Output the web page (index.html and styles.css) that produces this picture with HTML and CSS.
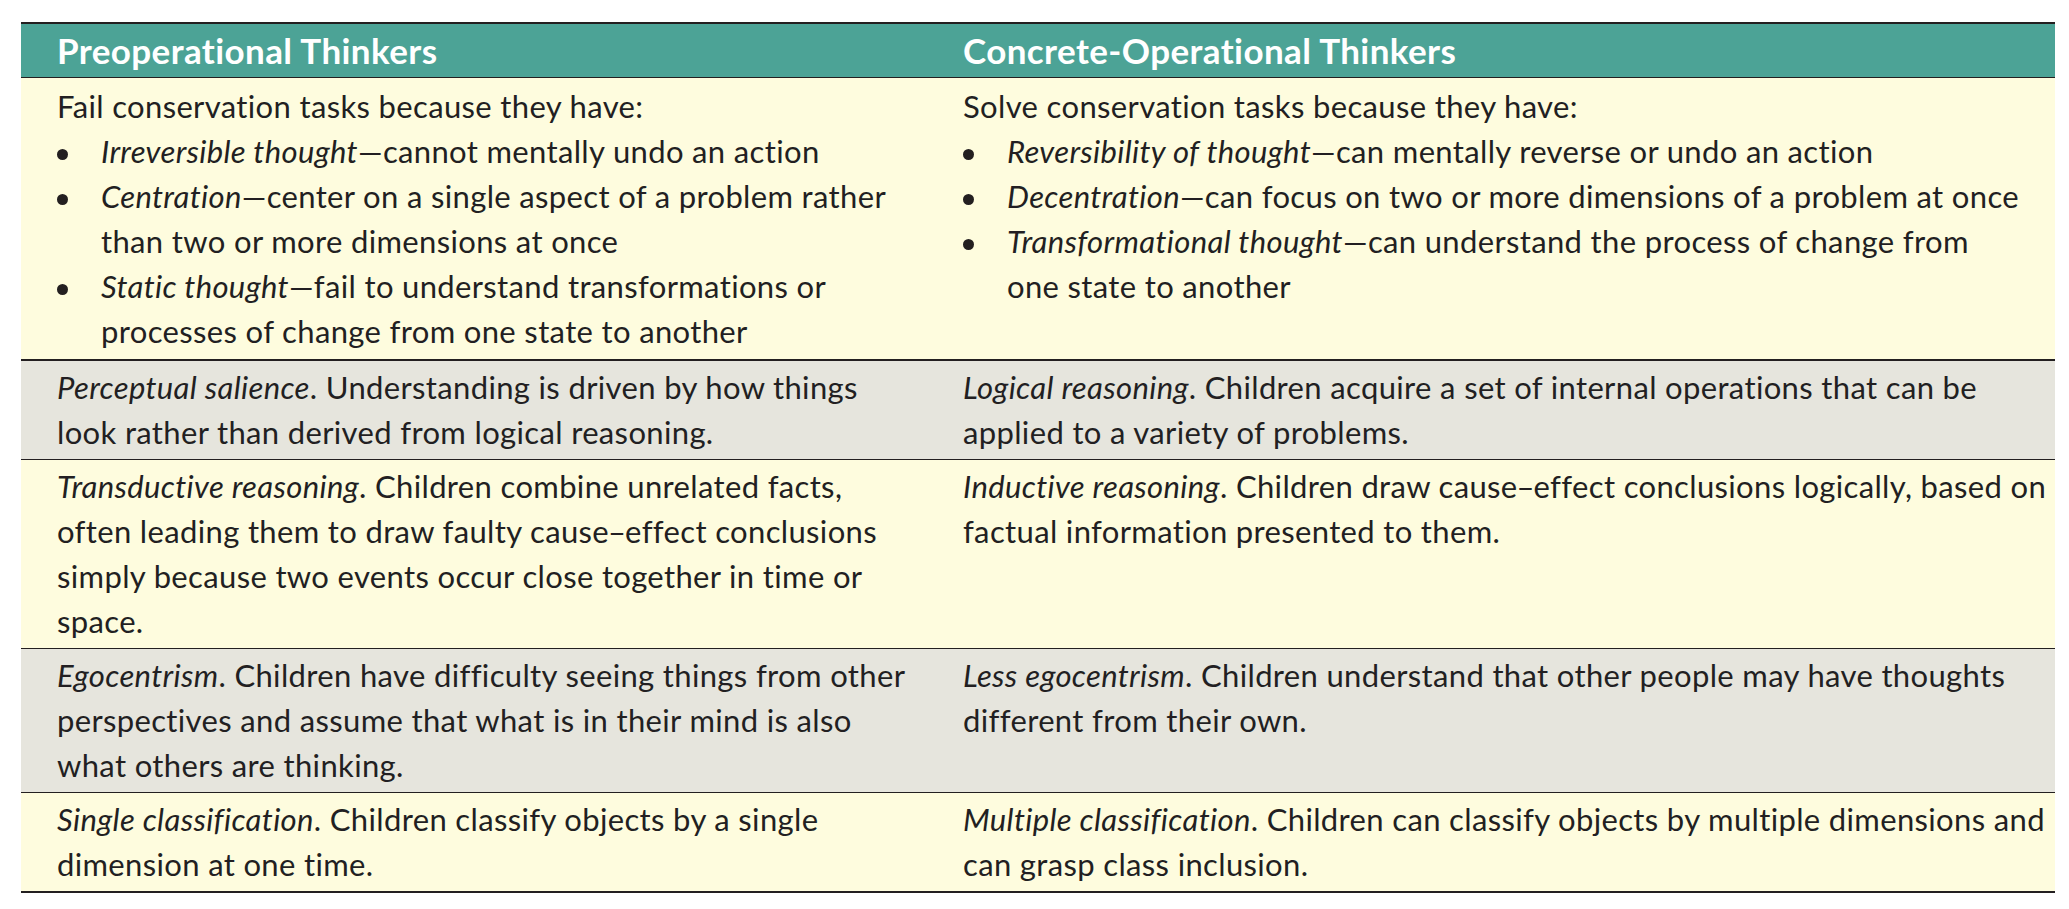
FILE: index.html
```html
<!DOCTYPE html>
<html lang="en">
<head>
<meta charset="utf-8">
<title>Preoperational vs Concrete-Operational Thinkers</title>
<link rel="stylesheet" href="styles.css">
</head>
<body>
<table class="compare">
  <colgroup>
    <col class="col-a">
    <col class="col-b">
  </colgroup>
  <thead>
    <tr>
      <th>Preoperational Thinkers</th>
      <th>Concrete-Operational Thinkers</th>
    </tr>
  </thead>
  <tbody>
    <tr class="row-plain row-first">
      <td>
        <p>Fail conservation tasks because they have:</p>
        <ul class="points">
          <li><em>Irreversible thought</em>—cannot mentally undo an action</li>
          <li><em>Centration</em>—center on a single aspect of a problem rather<br>than two or more dimensions at once</li>
          <li><em>Static thought</em>—fail to understand transformations or<br>processes of change from one state to another</li>
        </ul>
      </td>
      <td>
        <p>Solve conservation tasks because they have:</p>
        <ul class="points">
          <li><em>Reversibility of thought</em>—can mentally reverse or undo an action</li>
          <li><em>Decentration</em>—can focus on two or more dimensions of a problem at once</li>
          <li><em>Transformational thought</em>—can understand the process of change from<br>one state to another</li>
        </ul>
      </td>
    </tr>
    <tr class="row-shade">
      <td><em>Perceptual salience</em>. Understanding is driven by how things<br>look rather than derived from logical reasoning.</td>
      <td><em>Logical reasoning</em>. Children acquire a set of internal operations that can be<br>applied to a variety of problems.</td>
    </tr>
    <tr class="row-plain">
      <td><em>Transductive reasoning</em>. Children combine unrelated facts,<br>often leading them to draw faulty cause<span class="dash">–</span>effect conclusions<br>simply because two events occur close together in time or<br>space.</td>
      <td><em>Inductive reasoning</em>. Children draw cause<span class="dash">–</span>effect conclusions logically, based on<br>factual information presented to them.</td>
    </tr>
    <tr class="row-shade">
      <td><em>Egocentrism</em>. Children have difficulty seeing things from other<br>perspectives and assume that what is in their mind is also<br>what others are thinking.</td>
      <td><em>Less egocentrism</em>. Children understand that other people may have thoughts<br>different from their own.</td>
    </tr>
    <tr class="row-plain row-last">
      <td><em>Single classification</em>. Children classify objects by a single<br>dimension at one time.</td>
      <td><em>Multiple classification</em>. Children can classify objects by multiple dimensions and<br>can grasp class inclusion.</td>
    </tr>
  </tbody>
</table>
</body>
</html>
```
FILE: styles.css
```css
html, body {
  margin: 0;
  padding: 0;
  background: #ffffff;
}

body {
  padding: 22px 0 0 21px;
  font-family: Lato, "Open Sans", "Liberation Sans", sans-serif;
  color: #221f22;
}

.compare {
  width: 2034px;
  border-collapse: collapse;
  table-layout: fixed;
  font-size: 31px;
  line-height: 45px;
  letter-spacing: 0.35px;
}

.col-a { width: 906px; }
.col-b { width: 1128px; }

.compare th {
  background: #4ca396;
  color: #ffffff;
  font-weight: 700;
  font-size: 35px;
  line-height: 53px;
  letter-spacing: 0.4px;
  text-align: left;
  padding: 0 20px 0 36px;
  border-top: 2px solid #231f20;
  border-bottom: 1px solid #231f20;
  white-space: nowrap;
}

.compare td {
  vertical-align: top;
  padding: 4px 20px 4px 36px;
  white-space: nowrap;
}

.compare em {
  font-style: italic;
}

.dash {
  margin: 0 -1px;
  letter-spacing: 0;
}

.row-plain { background: #fefcde; }
.row-shade { background: #e6e5dd; }

.compare tbody tr { border-bottom: 1px solid #231f20; }
.compare tbody tr.row-first { border-bottom: 2px solid #231f20; }
.compare tbody tr.row-last { border-bottom: 2px solid #231f20; }

.row-first td {
  padding-top: 6px;
  padding-bottom: 5px;
}

.compare p {
  margin: 0;
}

.points {
  list-style: none;
  margin: 0;
  padding: 0;
}

.points li {
  padding-left: 44px;
  text-indent: -44px;
}

.points li::before {
  content: "";
  display: inline-block;
  width: 11px;
  height: 11px;
  border-radius: 50%;
  background: #231f20;
  margin-right: 33px;
  vertical-align: 3px;
}
```
